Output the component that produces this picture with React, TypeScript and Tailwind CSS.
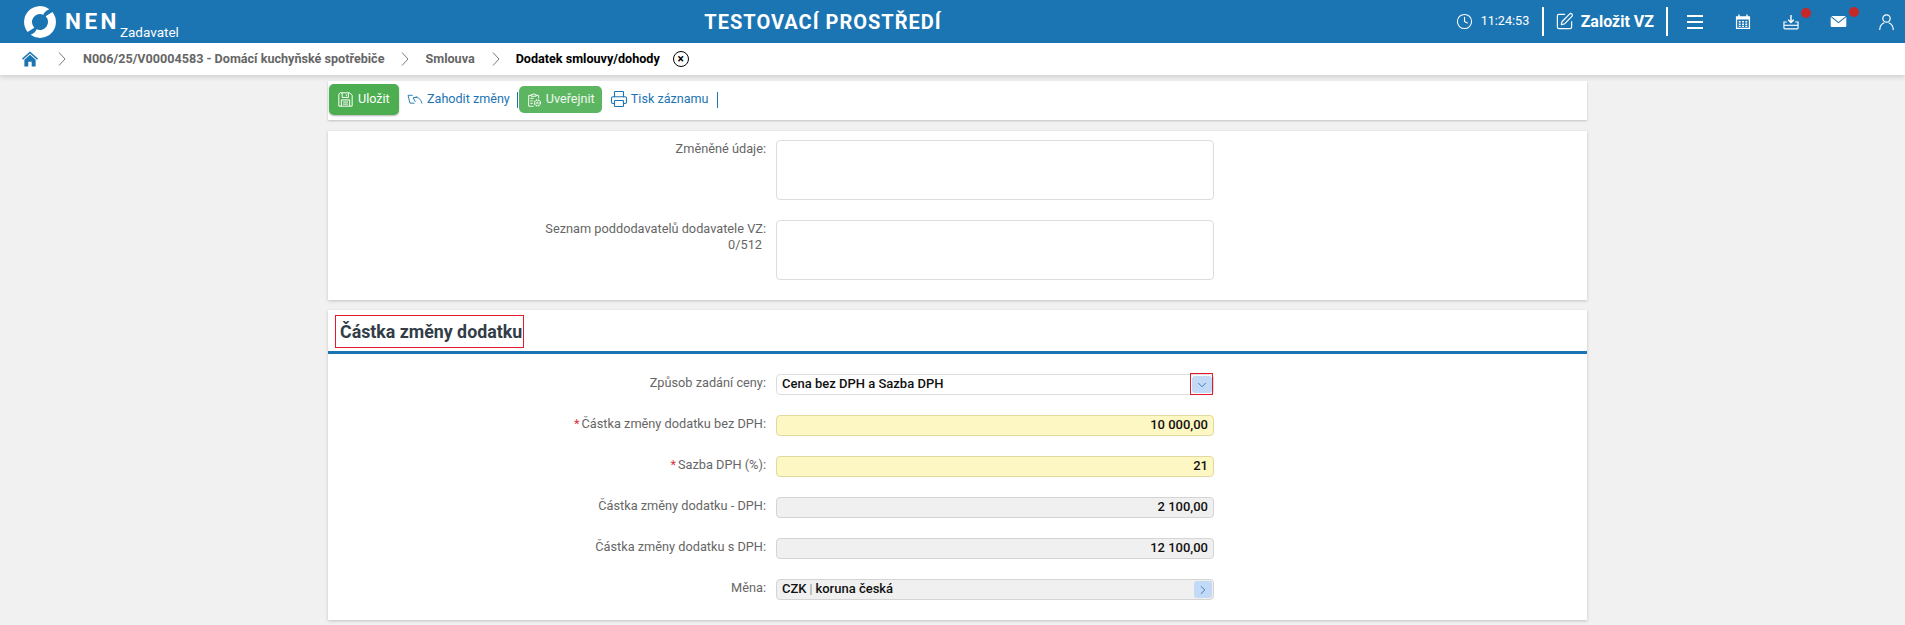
import { ChevronDown, ChevronRight, Clock, Printer, SquarePen } from 'lucide-react';

const LOGO_SWOOSH = 'M0.2 17A15.8 15.8 0 0 1 31 11C28 10 25 10.5 22.9 12A8 8 0 0 0 8.1 17.4Z';

function Logo() {
  return (
    <svg width="32" height="32" viewBox="0 0 32 32" fill="white">
      <g transform="rotate(-35 16 16)">
        <path d={LOGO_SWOOSH} />
        <path d={LOGO_SWOOSH} transform="rotate(180 16 16)" />
      </g>
    </svg>
  );
}

function FloppyIcon() {
  return (
    <svg width="15" height="15" viewBox="0 0 18 18" fill="none" stroke="white" strokeWidth="1.2">
      <path d="M2.5 1H14L17 4V17H1V2.5Z" />
      <path d="M5 1V6.5H12.5V1M10 3V5" />
      <path d="M4 17V9.5H14V17M6 12H12M6 14.5H12" />
    </svg>
  );
}

function PublishIcon() {
  return (
    <svg width="15" height="16" viewBox="0 0 18 18" fill="none" stroke="white" strokeWidth="1.1">
      <path d="M8 16.5H2V3.5H5M11 3.5H14V7" />
      <path d="M5 4.5V2.5H7C7 1 9 1 9 2.5H11V4.5Z" />
      <path d="M4 7H8M4 10H7M4 13H7" />
      <circle cx="12.5" cy="12.5" r="3.5" strokeDasharray="2 0.8" strokeWidth="1.6" />
      <circle cx="12.5" cy="12.5" r="1" />
    </svg>
  );
}

function DiscardIcon() {
  return (
    <svg width="16" height="12" viewBox="0 0 17 13" fill="none" stroke="#1c75b3" strokeWidth="1">
      <path d="M6 2.5H1L3 11H8" />
      <path d="M16 11.5C15 6 11 3.5 6.5 5.5L9 9.5M6.5 5.5L11 4" />
    </svg>
  );
}

function HomeIcon() {
  return (
    <svg width="16" height="16" viewBox="0 0 17 16" fill="#1c75b3">
      <path d="M8.5 0L17 7.6L16 8.8L8.5 2.2L1 8.8L0 7.6Z" />
      <path d="M8.5 3.6L14.5 8.8V16H10.3V11H6.7V16H2.5V8.8Z" />
    </svg>
  );
}

function CalendarIcon() {
  return (
    <svg width="16" height="17" viewBox="0 0 17 17" fill="white">
      <path d="M1 3H3.5V1H5V3H12V1H13.5V3H16V16.5H1ZM2.3 6.5V15.2H14.7V6.5Z" />
      <path d="M4 8H6V9.5H4ZM7.5 8H9.5V9.5H7.5ZM11 8H13V9.5H11ZM4 10.6H6V12.1H4ZM7.5 10.6H9.5V12.1H7.5ZM11 10.6H13V12.1H11ZM4 13H6V14.3H4ZM7.5 13H9.5V14.3H7.5ZM11 13H13V14.3H11Z" />
    </svg>
  );
}

function DownloadIcon() {
  return (
    <svg width="16" height="16" viewBox="0 0 17 16" fill="none" stroke="white" strokeWidth="1.2">
      <path d="M8.5 0.5V8M5.5 5.5L8.5 8.5L11.5 5.5" strokeWidth="1.5" />
      <path d="M4 8H1V14.5C1 15 1.3 15.3 2 15.3H15C15.7 15.3 16 15 16 14.5V8H13" />
      <path d="M1 11.5H16" />
    </svg>
  );
}

function MailIcon() {
  return (
    <svg width="17" height="11" viewBox="0 0 17 12" fill="white">
      <path d="M0.5 0H16.5L8.5 6.5Z" />
      <path d="M0 1L8.5 8L17 1V11C17 11.6 16.6 12 16 12H1C0.4 12 0 11.6 0 11Z" />
    </svg>
  );
}

function UserIcon() {
  return (
    <svg width="15" height="16" viewBox="0 0 15 16" fill="none" stroke="white" strokeWidth="1.2">
      <circle cx="7.5" cy="4.5" r="3.7" />
      <path d="M0.7 16C0.7 12 3 9.8 5.3 8.8M14.3 16C14.3 12 12 9.8 9.7 8.8" />
    </svg>
  );
}

function Chevron({ first }: { first?: boolean }) {
  return (
    <svg
      width="8"
      height="14"
      viewBox="0 0 8 14"
      fill="none"
      stroke="#7a7a7a"
      strokeWidth="1"
      className={first ? 'ml-[20px] mr-[17px]' : 'ml-[17px] mr-[16px]'}
    >
      <path d="M1 0.5L7 7L1 13.5" />
    </svg>
  );
}

interface FieldProps {
  label: string;
  required?: boolean;
  value: React.ReactNode;
  tone: 'plain' | 'yellow' | 'gray';
  left?: boolean;
  button?: 'down' | 'right';
}

function Field({ label, required, value, tone, left, button }: FieldProps) {
  const toneClass =
    tone === 'yellow'
      ? 'bg-[#fdf7c3] border-[#e2d9a0]'
      : tone === 'gray'
        ? 'bg-[#f0f0f0] border-[#d4d4d4]'
        : 'bg-white border-[#dddddd]';
  return (
    <div className="flex items-center h-[21px]">
      <div className="w-[448px] pr-[10px] -mt-[4px] text-right text-[12.75px] text-[#666]">
        {required && <span className="text-[#d9363e] mr-[2px]">*</span>}
        {label}:
      </div>
      <div
        className={`relative w-[438px] h-[21px] rounded-[4px] border flex items-center px-[5px] pb-[2px] text-[13px] font-medium text-[#111] ${toneClass} ${left ? 'justify-start' : 'justify-end'}`}
      >
        {value}
        {button === 'down' && (
          <div className="absolute right-0 top-[-2px] w-[23px] h-[22px] border border-[#e21b2c] pl-[1px] pt-[2px] pb-[1px]">
            <div className="w-full h-full rounded-[3px] bg-[#c2daf5] flex items-center justify-center">
              <ChevronDown className="w-[14px] h-[14px] text-[#2d6cb5]" strokeWidth={1.5} />
            </div>
          </div>
        )}
        {button === 'right' && (
          <div className="absolute right-[1px] top-[1px] w-[18px] h-[17px] rounded-[3px] bg-[#c2daf5] flex items-center justify-center">
            <ChevronRight className="w-[14px] h-[14px] text-[#2d6cb5]" strokeWidth={1.5} />
          </div>
        )}
      </div>
    </div>
  );
}

export default function App() {
  return (
    <div className="h-[625px] overflow-hidden bg-[#f1f1f1] font-['Roboto',sans-serif]">
      {/* Header */}
      <header className="h-[43px] bg-[#1c75b3] flex items-center text-white relative">
        <div className="flex items-center w-[611px] pl-[24px]">
          <Logo />
          <span className="ml-[9px] text-[22.5px] font-bold tracking-[3.5px] leading-none">NEN</span>
          <span className="mt-[22px] text-[13.5px] leading-none">Zadavatel</span>
        </div>
        <div className="w-[424px] text-center text-[20px] font-bold tracking-[1px]">TESTOVACÍ PROSTŘEDÍ</div>
        <div className="ml-auto flex items-center h-full">
          <Clock className="w-[17px] h-[17px]" strokeWidth={1.5} />
          <span className="ml-[8px] text-[12.6px] w-[49px]">11:24:53</span>
          <div className="w-[2px] h-[29px] bg-white ml-[12px]" />
          <SquarePen className="w-[19px] h-[19px] ml-[11px]" strokeWidth={1.5} />
          <span className="ml-[7px] text-[16px] font-bold whitespace-nowrap">Založit VZ</span>
          <div className="w-[2px] h-[29px] bg-white ml-[12px]" />
          <div className="ml-[19px] w-[16px] flex flex-col gap-[4px]">
            <div className="h-[2px] bg-white" />
            <div className="h-[2px] bg-white" />
            <div className="h-[2px] bg-white" />
          </div>
          <div className="ml-[32px]">
            <CalendarIcon />
          </div>
          <div className="ml-[32px] relative">
            <DownloadIcon />
            <span className="absolute left-[18px] top-[-6px] w-[10px] h-[10px] rounded-full bg-[#c62828]" />
          </div>
          <div className="ml-[31px] relative">
            <MailIcon />
            <span className="absolute left-[19px] top-[-9px] w-[10px] h-[10px] rounded-full bg-[#c62828]" />
          </div>
          <div className="ml-[32px] mr-[11px]">
            <UserIcon />
          </div>
        </div>
      </header>

      {/* Breadcrumb */}
      <nav className="relative h-[32px] bg-white shadow-[0_2px_5px_rgba(0,0,0,0.15)] flex items-center pl-[22px] text-[12.6px] font-bold">
        <HomeIcon />
        <Chevron first />
        <span className="text-[#666]">N006/25/V00004583 - Domácí kuchyňské spotřebiče</span>
        <Chevron />
        <span className="text-[#666]">Smlouva</span>
        <Chevron />
        <span className="text-black">Dodatek smlouvy/dohody</span>
        <span className="ml-[13px] w-[16px] h-[16px] rounded-full border border-black flex items-center justify-center text-[12px] leading-none text-black">
          ×
        </span>
      </nav>

      <main className="w-[1259px] ml-[328px] pt-[6px]">
        {/* Toolbar */}
        <div className="h-[39px] bg-white shadow-[0_1px_2px_rgba(0,0,0,0.2)] flex items-center pb-[2px] text-[12.6px] text-[#1c75b3]">
          <button className="ml-[1px] h-[31px] w-[70px] rounded-[5px] bg-[#4cae50] text-white flex items-center pl-[9px] gap-[5px] shadow-[0_1px_2px_rgba(0,0,0,0.3)]">
            <FloppyIcon />
            <span>Uložit</span>
          </button>
          <span className="ml-[8px] flex items-center gap-[4px]">
            <DiscardIcon />
            Zahodit změny
          </span>
          <div className="w-px h-[16px] bg-[#1c75b3] ml-[7px]" />
          <button className="ml-[1px] h-[27px] w-[83px] rounded-[5px] bg-[#5cb560] text-white/90 flex items-center pl-[8px] gap-[4px]">
            <PublishIcon />
            <span>Uveřejnit</span>
          </button>
          <span className="ml-[8px] flex items-center gap-[3px]">
            <Printer className="w-[18px] h-[18px]" strokeWidth={1.5} />
            Tisk záznamu
          </span>
          <div className="w-px h-[16px] bg-[#1c75b3] ml-[8px]" />
        </div>

        {/* Text areas card */}
        <section className="mt-[11px] h-[169px] bg-white shadow-[0_1px_3px_rgba(0,0,0,0.2)] pt-[9px]">
          <div className="flex">
            <div className="w-[448px] pr-[10px] text-right text-[12.75px] leading-[16px] text-[#666] pt-[1px]">Změněné údaje:</div>
            <div className="w-[438px] h-[60px] rounded-[4px] border border-[#dddddd]" />
          </div>
          <div className="flex mt-[20px]">
            <div className="w-[448px] pr-[10px] text-right text-[12.75px] leading-[16px] text-[#666] pt-[1px]">
              <div className="whitespace-nowrap">Seznam poddodavatelů dodavatele VZ:</div>
              <div className="pr-[4px]">0/512</div>
            </div>
            <div className="w-[438px] h-[60px] rounded-[4px] border border-[#dddddd]" />
          </div>
        </section>

        {/* Amount card */}
        <section className="mt-[10px] h-[310px] bg-white shadow-[0_1px_3px_rgba(0,0,0,0.2)] pt-[5px]">
          <div className="h-[39px] border-b-[3px] border-[#1c75b3] pl-[7px]">
            <h2 className="w-[189px] h-[33px] border border-[#e21b2c] pl-[4px] pt-[2px] flex items-center whitespace-nowrap text-[17.8px] font-bold text-[#333d47]">
              Částka změny dodatku
            </h2>
          </div>
          <div className="pt-[20px] flex flex-col gap-[20px]">
            <Field label="Způsob zadání ceny" value="Cena bez DPH a Sazba DPH" tone="plain" left button="down" />
            <Field label="Částka změny dodatku bez DPH" required value="10 000,00" tone="yellow" />
            <Field label="Sazba DPH (%)" required value="21" tone="yellow" />
            <Field label="Částka změny dodatku - DPH" value="2 100,00" tone="gray" />
            <Field label="Částka změny dodatku s DPH" value="12 100,00" tone="gray" />
            <Field
              label="Měna"
              value={
                <>
                  CZK<span className="mx-[3px] font-light text-[#666]">|</span>koruna česká
                </>
              }
              tone="gray"
              left
              button="right"
            />
          </div>
        </section>
      </main>
    </div>
  );
}
